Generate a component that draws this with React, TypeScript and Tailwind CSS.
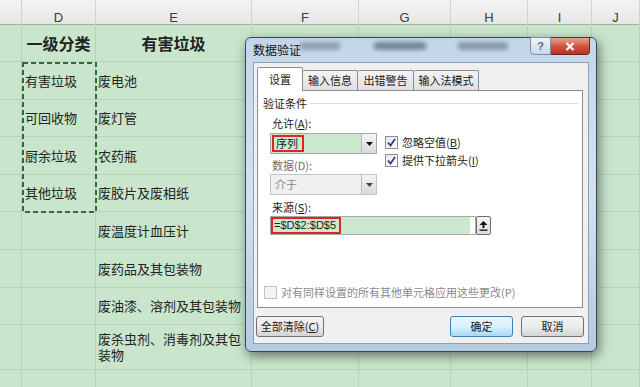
import React from "react";

const cjk = { fontFamily: '"Noto Sans CJK SC", "Noto Sans", sans-serif' };

type Row = { h: string; d?: string; e?: string; head?: boolean };

const rows: Row[] = [
  { h: "h-[37px]", d: "一级分类", e: "有害垃圾", head: true },
  { h: "h-[38px]", d: "有害垃圾", e: "废电池" },
  { h: "h-[37px]", d: "可回收物", e: "废灯管" },
  { h: "h-[38px]", d: "厨余垃圾", e: "农药瓶" },
  { h: "h-[37px]", d: "其他垃圾", e: "废胶片及废相纸" },
  { h: "h-[38px]", e: "废温度计血压计" },
  { h: "h-[38px]", e: "废药品及其包装物" },
  { h: "h-[37px]", e: "废油漆、溶剂及其包装物" },
  { h: "h-[45px]", e: "废杀虫剂、消毒剂及其包装物" },
  { h: "h-[40px]" },
];

const letters = ["", "D", "E", "F", "G", "H", "I", "J"];

function Check({ on, disabled }: { on?: boolean; disabled?: boolean }) {
  return (
    <span
      className={`flex h-[13px] w-[13px] shrink-0 items-center justify-center border ${
        disabled ? "border-[#c3c3c3] bg-[#f4f4f4]" : "border-[#8e8f8f] bg-gradient-to-br from-[#e6e6e6] to-white"
      }`}
    >
      {on && (
        <svg width="11" height="11" viewBox="0 0 11 11">
          <path d="M2 5.5 L4.5 8.5 L9 2" fill="none" stroke="#253f7c" strokeWidth="1.7" />
        </svg>
      )}
    </span>
  );
}

function DropBtn({ disabled }: { disabled?: boolean }) {
  return (
    <span className="flex h-full w-[15px] items-center justify-center border-l border-[#b9b9b9] bg-gradient-to-b from-[#f5f5f5] to-[#d9d9d9]">
      <svg width="7" height="4" viewBox="0 0 7 4">
        <polygon points="0,0 7,0 3.5,4" fill={disabled ? "#444" : "#111"} />
      </svg>
    </span>
  );
}

function Btn({ children, w, primary }: { children: React.ReactNode; w: string; primary?: boolean }) {
  return (
    <div
      className={`flex h-[21px] ${w} items-center justify-center rounded-[3px] border text-[11px] text-[#1a1a1a] ${
        primary
          ? "border-[#3c7fb1] bg-gradient-to-b from-[#eaf6fd] via-[#d9f0fc] to-[#a7d9f5]"
          : "border-[#707070] bg-gradient-to-b from-[#f4f4f4] via-[#ebebeb] to-[#d4d4d4]"
      }`}
    >
      {children}
    </div>
  );
}

function Dialog() {
  return (
    <div
      className="absolute left-[245px] top-[37px] h-[315px] w-[352px] rounded-[6px] border border-[#34495e] bg-gradient-to-b from-[#c3d6e9] via-[#d4e2ef] to-[#b4cadf] shadow-[2px_4px_12px_rgba(0,0,0,0.5)]"
      style={cjk}
    >
      <div className="relative flex h-[24px] items-center pl-[7px] text-[12px] text-[#111]">
        数据验证
        <div className="absolute left-[54px] top-[4px] h-[8px] w-[40px] rounded-[3px] bg-[#3f4f60] opacity-40 blur-[2px]" />
        <div className="absolute left-[128px] top-[4px] h-[8px] w-[52px] rounded-[3px] bg-[#34475a] opacity-55 blur-[2px]" />
        <div className="absolute left-[212px] top-[4px] h-[8px] w-[50px] rounded-[3px] bg-[#3f4f60] opacity-45 blur-[2px]" />
        <div className="absolute right-[6px] top-[-1px] flex">
          <div
            className="flex h-[18px] w-[21px] items-center justify-center rounded-bl-[4px] border border-[#7a8ea5] bg-gradient-to-b from-[#f1f5fa] to-[#c8d7e7] text-[11px] font-bold text-[#5a6a7c]"
            style={{ fontFamily: '"Liberation Sans", sans-serif' }}
          >
            ?
          </div>
          <div className="flex h-[18px] w-[39px] items-center justify-center rounded-br-[4px] border border-l-0 border-[#6b2620] bg-gradient-to-b from-[#e8a597] via-[#d2543f] to-[#b9321f]">
            <svg width="10" height="9" viewBox="0 0 10 9">
              <path d="M1.5 1 L8.5 8 M8.5 1 L1.5 8" stroke="#fff" strokeWidth="2.2" />
            </svg>
          </div>
        </div>
      </div>

      <div className="mx-[7px] flex h-[282px] flex-col border border-[#8aa0b8] bg-[#f0f0f0] text-[11px] text-[#1a1a1a]">
        <div className="ml-[3px] mt-[4px] flex h-[23px] items-end">
          <div className="relative z-10 -mb-px flex h-[24px] w-[46px] items-center justify-center rounded-t-[2px] border border-b-0 border-[#898c95] bg-white">
            设置
          </div>
          {[
            ["输入信息", "w-[55px]"],
            ["出错警告", "w-[56px]"],
            ["输入法模式", "w-[65px]"],
          ].map(([t, w]) => (
            <div
              key={t}
              className={`flex h-[20px] ${w} items-center justify-center rounded-t-[2px] border border-b-0 border-l-0 border-[#898c95] bg-gradient-to-b from-[#f3f3f3] to-[#e0e0e0]`}
            >
              {t}
            </div>
          ))}
        </div>

        <div className="ml-[3px] flex h-[218px] w-[326px] flex-col border border-[#898c95] bg-white">
          <div className="ml-[5px] mr-[4px] mt-[6px] flex h-[12px] items-center gap-[3px] leading-[12px]">
            <span>验证条件</span>
            <span className="h-px flex-1 bg-[#d5dfe5]" />
          </div>
          <div className="ml-[14px] mt-[8px] h-[12px] leading-[12px]">
            允许(<span className="underline">A</span>):
          </div>
          <div className="ml-[12px] mt-[4px] flex h-[21px] items-start">
            <div className="flex h-[21px] w-[107px] border border-[#a8a8a8] bg-[#cce8cf]">
              <span className="ml-px mt-px flex h-[17px] w-[32px] items-center border-2 border-[#e32222] pl-[2px]">序列</span>
              <span className="flex-1" />
              <DropBtn />
            </div>
            <div className="ml-[8px] mt-[2px] flex flex-col gap-[4px]">
              <div className="flex h-[14px] items-center gap-[4px]">
                <Check on />
                <span>
                  忽略空值(<span className="underline">B</span>)
                </span>
              </div>
              <div className="flex h-[14px] items-center gap-[4px]">
                <Check on />
                <span>
                  提供下拉箭头(<span className="underline">I</span>)
                </span>
              </div>
            </div>
          </div>
          <div className="ml-[14px] mt-[5px] h-[12px] leading-[12px] text-[#6d6d6d]">数据(D):</div>
          <div className="ml-[12px] mt-[3px] flex h-[21px] w-[107px] border border-[#c4c4c4] bg-[#f0f0f0] text-[#8a8a8a]">
            <span className="flex items-center pl-[4px]">介于</span>
            <span className="flex-1" />
            <DropBtn disabled />
          </div>
          <div className="ml-[14px] mt-[6px] h-[12px] leading-[12px]">
            来源(<span className="underline">S</span>):
          </div>
          <div className="ml-[12px] mt-[3px] flex h-[19px] items-stretch">
            <div className="flex w-[206px] border border-[#a8a8a8] bg-white">
              <div className="flex w-[199px] bg-[#cce8cf]">
                <span
                  className="flex h-[17px] w-[70px] items-center border-2 border-[#e32222] pl-[1px] text-[11px]"
                  style={{ fontFamily: '"Liberation Sans", sans-serif' }}
                >
                  =$D$2:$D$5
                </span>
              </div>
            </div>
            <div className="flex w-[15px] items-center justify-center rounded-[2px] border border-[#707070] bg-gradient-to-b from-[#f6f6f6] to-[#dcdcdc]">
              <svg width="9" height="10" viewBox="0 0 9 10">
                <polygon points="4.5,0 8.5,4 5.5,4 5.5,7 3.5,7 3.5,4 0.5,4" fill="#111" />
                <rect x="0.5" y="8.5" width="8" height="1.3" fill="#111" />
              </svg>
            </div>
          </div>
          <div className="flex-1" />
          <div className="mb-[8px] ml-[6px] flex h-[14px] items-center gap-[4px] text-[#8a8a8a]">
            <Check disabled />
            <span>对有同样设置的所有其他单元格应用这些更改(P)</span>
          </div>
        </div>

        <div className="ml-[2px] mr-[4px] mt-[8px] flex items-center">
          <Btn w="w-[68px]">
            全部清除(<span className="underline">C</span>)
          </Btn>
          <div className="flex-1" />
          <Btn w="w-[63px]" primary>
            确定
          </Btn>
          <div className="w-[8px]" />
          <Btn w="w-[63px]">取消</Btn>
        </div>
      </div>
    </div>
  );
}

export default function App() {
  return (
    <div className="relative h-[387px] w-[640px] overflow-hidden bg-[#c9e6cc]" style={cjk}>
      <div
        className="grid h-[25px] grid-cols-[22px_74px_156px_107px_92px_77px_64px_1fr] border-b border-[#9fb3a0] bg-gradient-to-b from-[#f4f4f4] to-[#e6e6e6] text-[13px] text-[#3a3a3a]"
        style={{ fontFamily: '"Liberation Sans", sans-serif' }}
      >
        {letters.map((l, i) => (
          <div key={i} className="flex items-center justify-center border-r border-[#d2d2d2] pt-[8px]">
            {l}
          </div>
        ))}
      </div>

      {rows.map((r, i) => (
        <div
          key={i}
          className={`grid ${r.h} grid-cols-[22px_74px_156px_107px_92px_77px_64px_1fr] border-b border-[#b7d4ba] text-[#222]`}
        >
          <div className="border-r border-[#b7d4ba]" />
          <div
            className={`flex items-center border-r border-[#b7d4ba] ${
              r.head ? "justify-center text-[16px] font-bold" : "pl-[3px] text-[13px]"
            }`}
          >
            {r.d}
          </div>
          <div
            className={`flex items-center border-r border-[#b7d4ba] ${
              r.head ? "justify-center text-[16px] font-bold" : "pl-[2px] text-[13px] leading-[16px]"
            }`}
          >
            {r.e}
          </div>
          {[0, 1, 2, 3, 4].map((k) => (
            <div key={k} className="border-r border-[#b7d4ba]" />
          ))}
        </div>
      ))}

      <svg className="absolute left-[22px] top-[62px]" width="75" height="151" viewBox="0 0 75 151">
        <rect x="1" y="1" width="73" height="149" fill="none" stroke="#2f6b3c" strokeWidth="2" strokeDasharray="5 3" />
      </svg>

      <Dialog />
    </div>
  );
}
